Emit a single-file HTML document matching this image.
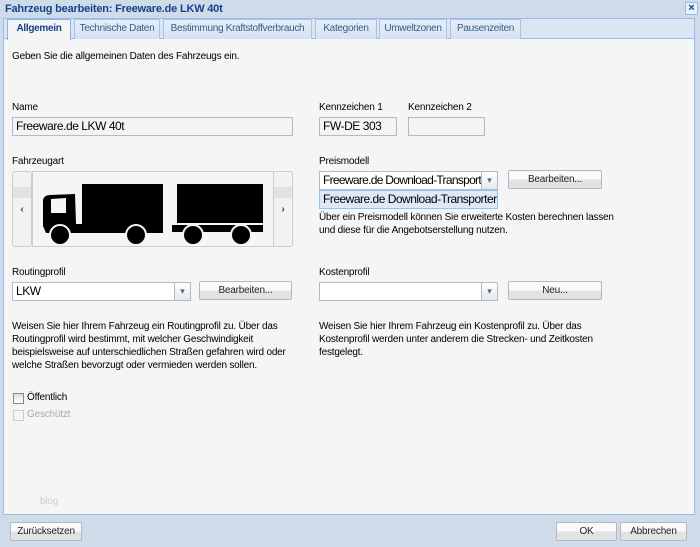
<!DOCTYPE html>
<html><head><meta charset="utf-8"><style>
*{box-sizing:border-box;margin:0;padding:0}
body{width:700px;height:547px;background:#cfdbe8;font-family:"Liberation Sans",sans-serif;font-size:10px;letter-spacing:-0.2px;color:#000;position:relative;overflow:hidden}
.a{position:absolute;white-space:nowrap}
.title{left:5px;top:3px;font-weight:bold;color:#15428b;font-size:11px;letter-spacing:-0.2px}
.close{left:685px;top:2px;width:13px;height:13px;border:1px solid #99bbe8;background:#e8f0fa;color:#15428b;font-size:11px;line-height:10px;text-align:center;font-weight:bold;letter-spacing:0}
.strip{left:3px;top:18px;width:692px;height:21px;background:#dae6f4;border:1px solid #99bbe8;border-bottom:none}
.tab{top:19px;height:20px;border:1px solid #a9c3e4;border-bottom:none;background:linear-gradient(#e6eef8,#d5e2f2);color:#3b5a82;text-align:center;line-height:18px;letter-spacing:-0.3px}
.tab.on{background:#f5f5f5;color:#15428b;font-weight:bold;height:21px;border-color:#8db2e3}
.panel{left:3px;top:38px;width:692px;height:477px;background:#f5f5f5;border:1px solid #99bbe8}
.inp{height:19px;border:1px solid #b5b8c8;background:#f4f4f4;font-size:12px;letter-spacing:-0.45px;padding-left:3px;line-height:17px;overflow:hidden}
.trig{position:absolute;right:0;top:0;width:16px;height:17px;border-left:1px solid #b5b8c8;background:linear-gradient(#fff,#e4e8ee);color:#4a6b9a;font-size:9px;text-align:center;line-height:17px;letter-spacing:0}
.btn{height:19px;border:1px solid #b0b8c4;border-radius:2px;background:linear-gradient(#fafafa 50%,#e2e2e2 50%);text-align:center;line-height:17px;color:#222}
.cb{width:11px;height:11px;border:1px solid #888;background:linear-gradient(#ddd,#fff)}
.t{line-height:13px}
</style></head><body>
<div class="a title">Fahrzeug bearbeiten: Freeware.de LKW 40t</div>
<div class="a close">×</div>
<div class="a strip"></div>
<div class="a panel"></div>
<div class="a tab on" style="left:7px;width:64px">Allgemein</div>
<div class="a tab" style="left:74px;width:86px">Technische Daten</div>
<div class="a tab" style="left:163px;width:149px">Bestimmung Kraftstoffverbrauch</div>
<div class="a tab" style="left:315px;width:62px">Kategorien</div>
<div class="a tab" style="left:379px;width:68px">Umweltzonen</div>
<div class="a tab" style="left:450px;width:71px">Pausenzeiten</div>

<div class="a" style="left:12px;top:51px">Geben Sie die allgemeinen Daten des Fahrzeugs ein.</div>
<div class="a" style="left:12px;top:102px">Name</div>
<div class="a inp" style="left:12px;top:117px;width:281px">Freeware.de LKW 40t</div>
<div class="a" style="left:319px;top:102px">Kennzeichen 1</div>
<div class="a inp" style="left:319px;top:117px;width:78px">FW-DE 303</div>
<div class="a" style="left:408px;top:102px">Kennzeichen 2</div>
<div class="a inp" style="left:408px;top:117px;width:77px"></div>

<div class="a" style="left:12px;top:156px">Fahrzeugart</div>
<div class="a" style="left:12px;top:171px;width:20px;height:76px;border:1px solid #ccc;border-radius:3px;background:linear-gradient(#f2f2f2 20%,#e2e2e2 20%,#e2e2e2 35%,#f2f2f2 35%);color:#15428b;font-weight:bold;text-align:center;line-height:76px">‹</div>
<div class="a" style="left:273px;top:171px;width:20px;height:76px;border:1px solid #ccc;border-radius:3px;background:linear-gradient(#f2f2f2 20%,#e2e2e2 20%,#e2e2e2 35%,#f2f2f2 35%);color:#15428b;font-weight:bold;text-align:center;line-height:76px">›</div>
<div class="a" style="left:32px;top:171px;width:242px;height:76px;border:1px solid #ccc;background:#f5f5f5"></div>
<svg class="a" style="left:0;top:0" width="300" height="260">
<path d="M43 200 Q44 195 50 195 L75 194 L76 224 L82 224 L82 184 L163 184 L163 233 L46 233 L43 226 Z" fill="#000"/>
<path d="M51 199 L66 198 L66 213 L51 213 Z" fill="#f5f5f5"/>
<rect x="177" y="184" width="86" height="39" fill="#000"/>
<rect x="172" y="225" width="91" height="7" fill="#000"/>
<g stroke="#f5f5f5" stroke-width="2" fill="#000">
<circle cx="60" cy="235" r="10"/><circle cx="136" cy="235" r="10"/><circle cx="193" cy="235" r="10"/><circle cx="241" cy="235" r="10"/></g>
</svg>

<div class="a" style="left:319px;top:156px">Preismodell</div>
<div class="a inp" style="left:319px;top:171px;width:179px;background:#fff;letter-spacing:-0.7px">Freeware.de Download-Transport<div class="trig">▾</div></div>
<div class="a btn" style="left:508px;top:170px;width:94px">Bearbeiten...</div>
<div class="a" style="left:319px;top:190px;width:179px;height:19px;border:1px solid #98c0f4;background:#dfe8f6;font-size:12px;letter-spacing:-0.5px;line-height:17px;padding-left:3px">Freeware.de Download-Transporter</div>
<div class="a t" style="left:319px;top:211px">Über ein Preismodell können Sie erweiterte Kosten berechnen lassen<br>und diese für die Angebotserstellung nutzen.</div>

<div class="a" style="left:12px;top:267px">Routingprofil</div>
<div class="a inp" style="left:12px;top:282px;width:179px;background:#fff">LKW<div class="trig">▾</div></div>
<div class="a btn" style="left:199px;top:281px;width:93px">Bearbeiten...</div>
<div class="a" style="left:319px;top:267px">Kostenprofil</div>
<div class="a inp" style="left:319px;top:282px;width:179px;background:#fff"><div class="trig">▾</div></div>
<div class="a btn" style="left:508px;top:281px;width:94px">Neu...</div>

<div class="a t" style="left:12px;top:320px">Weisen Sie hier Ihrem Fahrzeug ein Routingprofil zu. Über das<br>Routingprofil wird bestimmt, mit welcher Geschwindigkeit<br>beispielsweise auf unterschiedlichen Straßen gefahren wird oder<br>welche Straßen bevorzugt oder vermieden werden sollen.</div>
<div class="a t" style="left:319px;top:320px">Weisen Sie hier Ihrem Fahrzeug ein Kostenprofil zu. Über das<br>Kostenprofil werden unter anderem die Strecken- und Zeitkosten<br>festgelegt.</div>

<div class="a cb" style="left:13px;top:393px"></div>
<div class="a" style="left:27px;top:392px">Öffentlich</div>
<div class="a cb" style="left:13px;top:410px;border-color:#ccc;background:#f5f5f5"></div>
<div class="a" style="left:27px;top:409px;color:#aaa">Geschützt</div>
<div class="a" style="left:40px;top:496px;color:#ccc">blog</div>

<div class="a btn" style="left:10px;top:522px;width:72px">Zurücksetzen</div>
<div class="a btn" style="left:556px;top:522px;width:61px">OK</div>
<div class="a btn" style="left:620px;top:522px;width:67px">Abbrechen</div>
</body></html>
